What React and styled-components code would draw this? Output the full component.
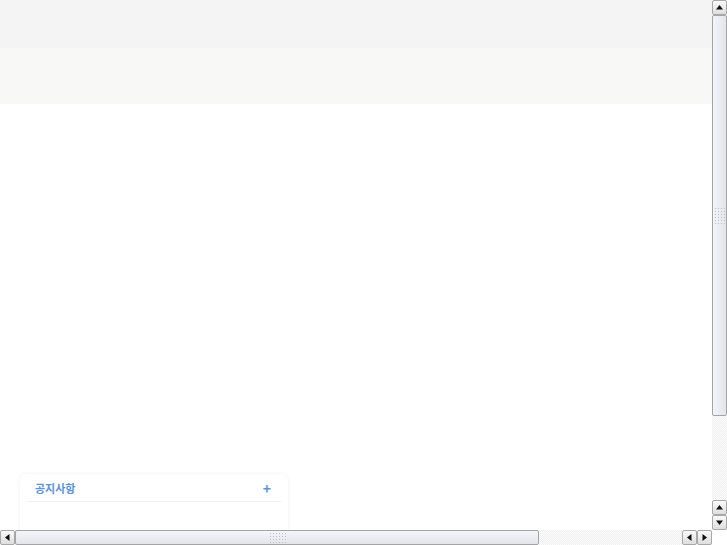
import styled, { createGlobalStyle } from "styled-components";

const GlobalStyle = createGlobalStyle`
  html, body {
    margin: 0;
    padding: 0;
    background: #fff;
    font-family: "Noto Sans CJK KR", "Noto Sans", sans-serif;
    overflow: hidden;
  }
`;

const Frame = styled.div`
  width: 727px;
  height: 545px;
  display: grid;
  grid-template-columns: 712px 15px;
  grid-template-rows: 530px 15px;
`;

const Viewport = styled.div`
  overflow: hidden;
`;

const Page = styled.div`
  width: 909px;
  min-height: 642px;
  display: flex;
  flex-direction: column;
`;

const TopBar = styled.header`
  height: 48px;
  background-color: #f4f4f4;
`;

const NavBar = styled.nav`
  height: 56px;
  background-color: #f8f8f7;
`;

const Main = styled.main`
  flex: 1;
  padding: 370px 0 0 20px;
  display: flex;
  gap: 20px;
`;

const Card = styled.section`
  width: 268px;
  height: 160px;
  background: #fff;
  border-radius: 6px 6px 0 0;
  box-shadow: 0 0 4px rgba(0, 0, 0, 0.06);
  padding: 0 7px;
  box-sizing: border-box;
`;

const CardHeader = styled.div`
  display: flex;
  align-items: center;
  justify-content: space-between;
  height: 27px;
  padding: 0 10px 0 8px;
  border-bottom: 1px solid #f0f0f0;
  h3 {
    margin: 0;
    font-size: 11px;
    font-weight: 700;
    color: #5e94d6;
  }
  span {
    font-size: 14px;
    font-weight: 700;
    color: #5e94d6;
    line-height: 1;
  }
`;

/* fake scrollbars */
const ScrollBar = styled.div`
  display: flex;
  flex-direction: ${(p) => (p.$vertical ? "column" : "row")};
  background: repeating-conic-gradient(#f0f0f0 0 25%, #fcfcfc 0 50%) 0 0 / 2px 2px;
`;

const Track = styled.div`
  flex: 1;
  display: flex;
  flex-direction: ${(p) => (p.$vertical ? "column" : "row")};
`;

const Thumb = styled.div`
  box-sizing: border-box;
  ${(p) => (p.$vertical ? "height" : "width")}: ${(p) => p.$size}px;
  border: 1px solid #a4a4a6;
  border-radius: 2px;
  background: ${(p) =>
    p.$vertical
      ? "linear-gradient(90deg, #f4f5f9, #e3e5ec)"
      : "linear-gradient(180deg, #f4f5f9, #e3e5ec)"};
  display: flex;
  align-items: center;
  justify-content: center;
`;

const Grip = styled.div`
  width: ${(p) => (p.$vertical ? "11px" : "17px")};
  height: ${(p) => (p.$vertical ? "17px" : "11px")};
  background: radial-gradient(circle, #bdbdc2 0.8px, transparent 1px) 0 0 / 3px 3px;
`;

const ArrowButton = styled.div`
  box-sizing: border-box;
  width: 15px;
  height: 15px;
  border: 1px solid #a8a8a8;
  border-radius: 2px;
  background: linear-gradient(180deg, #fafafa, #dedede);
  display: flex;
  align-items: center;
  justify-content: center;
`;

const Corner = styled.div`
  background: #fff;
`;

const rot = { up: 0, right: 90, down: 180, left: 270 };

const Arrow = ({ dir }) => (
  <ArrowButton>
    <svg width="7" height="7" viewBox="0 0 7 7" style={{ transform: `rotate(${rot[dir]}deg)` }}>
      <polygon points="3.5,1 7,5.5 0,5.5" fill="#111" />
    </svg>
  </ArrowButton>
);

const App = () => {
  return (
    <>
      <GlobalStyle />
      <Frame>
        <Viewport>
          <Page>
            <TopBar />
            <NavBar />
            <Main>
              <Card>
                <CardHeader>
                  <h3>공지사항</h3>
                  <span>+</span>
                </CardHeader>
              </Card>
            </Main>
          </Page>
        </Viewport>
        <ScrollBar $vertical>
          <Arrow dir="up" />
          <Track $vertical>
            <Thumb $vertical $size={401}>
              <Grip $vertical />
            </Thumb>
          </Track>
          <Arrow dir="up" />
          <Arrow dir="down" />
        </ScrollBar>
        <ScrollBar>
          <Arrow dir="left" />
          <Track>
            <Thumb $size={524}>
              <Grip />
            </Thumb>
          </Track>
          <Arrow dir="left" />
          <Arrow dir="right" />
        </ScrollBar>
        <Corner />
      </Frame>
    </>
  );
};

export default App;
